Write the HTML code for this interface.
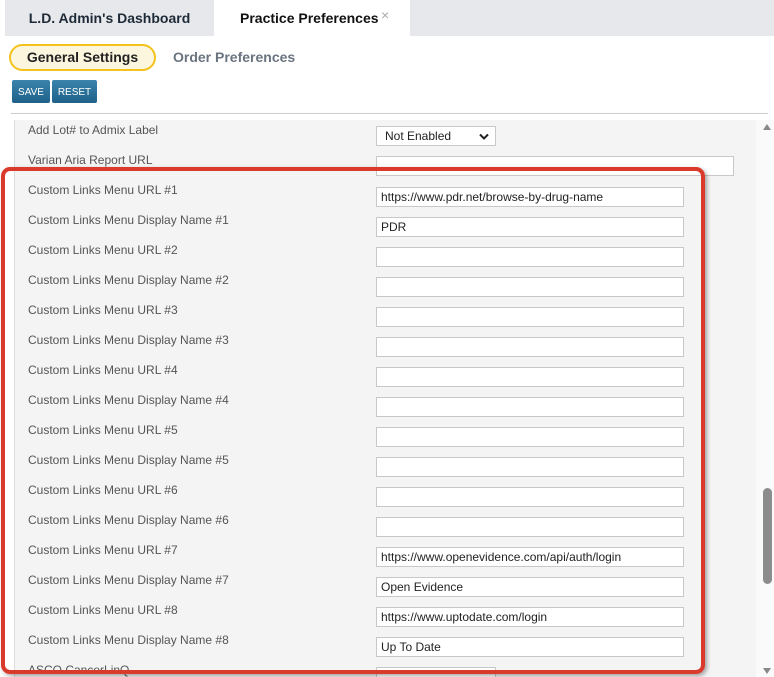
<!DOCTYPE html>
<html><head><style>
html,body{margin:0;width:774px;height:677px;overflow:hidden}
body{background:#fff;font-family:"Liberation Sans",Arial,sans-serif;position:relative}
.tabs{position:absolute;left:0;top:0;width:774px;height:36px;background:#fff}
.t1{position:absolute;left:5px;top:0;width:209px;height:36px;background:#e6e8eb;font-weight:bold;font-size:14px;color:#1e2a38;line-height:36px;text-align:center}
.t2{position:absolute;left:214px;top:0;width:196px;height:36px;background:#fff;font-weight:bold;font-size:14px;color:#111;line-height:36px}
.t3{position:absolute;left:410px;top:0;width:364px;height:36px;background:#e6e8eb}
.pill{position:absolute;left:9px;top:44px;width:143px;height:23px;border:2px solid #f3c21c;border-radius:14px;background:#fdf6df;font-weight:bold;font-size:14px;line-height:23px;text-align:center;color:#222}
.op{position:absolute;left:173px;top:49px;font-weight:bold;font-size:14px;color:#6a7480}
.btn{position:absolute;top:80px;height:23px;background:linear-gradient(#3a84ad,#1f6189);color:#fff;font-size:10px;text-align:center;border-radius:2px;box-sizing:border-box;padding-top:7px;line-height:11px}
.sep{position:absolute;left:11px;top:113px;width:757px;height:1px;background:#ccc}
.panel{position:absolute;left:14px;top:120px;width:741px;height:557px;background:#f4f4f4;border-left:1px solid #ddd;border-right:1px solid #ddd}
.lbl{position:absolute;left:28px;font-size:12px;color:#555}
.in{position:absolute;left:376px;width:308px;height:20px;background:#fff;border:1px solid #c8c8c8;font-size:12px;color:#222;line-height:19px;padding-left:4px;box-sizing:border-box}
.red{position:absolute;left:1px;top:167px;width:696px;height:499px;border:4px solid #d93a2b;border-radius:9px;box-shadow:2px 2px 4px rgba(0,0,0,.35)}
.sb{position:absolute;left:756px;top:120px;width:18px;height:557px;background:#fafafa}
</style></head><body>
<div class="tabs"><div class="t1">L.D. Admin's Dashboard</div><div class="t2"><span style="margin-left:26px">Practice Preferences</span><span style="position:absolute;left:167px;top:-3px;color:#aaa;font-weight:normal;font-size:14px">×</span></div><div class="t3"></div></div>
<div class="pill">General Settings</div>
<div class="op">Order Preferences</div>
<div class="btn" style="left:12px;width:38px">SAVE</div>
<div class="btn" style="left:52px;width:45px">RESET</div>
<div class="sep"></div>
<div class="panel"></div>
<div class="lbl" style="top:123px">Add Lot# to Admix Label</div>
<div class="in" style="top:126px;width:120px;height:20px;line-height:19px;padding-left:8px">Not Enabled<svg style="position:absolute;right:6px;top:6px" width="10" height="7" viewBox="0 0 10 7"><path d="M1 1.5L5 5.5L9 1.5" stroke="#222" stroke-width="2" fill="none"/></svg></div>
<div class="lbl" style="top:153px">Varian Aria Report URL</div>
<div class="in" style="top:156px;width:358px"></div>
<div class="lbl" style="top:183px">Custom Links Menu URL #1</div><div class="in" style="top:187px">https://www.pdr.net/browse-by-drug-name</div>
<div class="lbl" style="top:213px">Custom Links Menu Display Name #1</div><div class="in" style="top:217px">PDR</div>
<div class="lbl" style="top:243px">Custom Links Menu URL #2</div><div class="in" style="top:247px"></div>
<div class="lbl" style="top:273px">Custom Links Menu Display Name #2</div><div class="in" style="top:277px"></div>
<div class="lbl" style="top:303px">Custom Links Menu URL #3</div><div class="in" style="top:307px"></div>
<div class="lbl" style="top:333px">Custom Links Menu Display Name #3</div><div class="in" style="top:337px"></div>
<div class="lbl" style="top:363px">Custom Links Menu URL #4</div><div class="in" style="top:367px"></div>
<div class="lbl" style="top:393px">Custom Links Menu Display Name #4</div><div class="in" style="top:397px"></div>
<div class="lbl" style="top:423px">Custom Links Menu URL #5</div><div class="in" style="top:427px"></div>
<div class="lbl" style="top:453px">Custom Links Menu Display Name #5</div><div class="in" style="top:457px"></div>
<div class="lbl" style="top:483px">Custom Links Menu URL #6</div><div class="in" style="top:487px"></div>
<div class="lbl" style="top:513px">Custom Links Menu Display Name #6</div><div class="in" style="top:517px"></div>
<div class="lbl" style="top:543px">Custom Links Menu URL #7</div><div class="in" style="top:547px">https://www.openevidence.com/api/auth/login</div>
<div class="lbl" style="top:573px">Custom Links Menu Display Name #7</div><div class="in" style="top:577px">Open Evidence</div>
<div class="lbl" style="top:603px">Custom Links Menu URL #8</div><div class="in" style="top:607px">https://www.uptodate.com/login</div>
<div class="lbl" style="top:633px">Custom Links Menu Display Name #8</div><div class="in" style="top:637px">Up To Date</div>
<div class="lbl" style="top:663px">ASCO CancerLinQ</div><div class="in" style="top:667px;width:120px;height:10px;border-bottom:none"></div>
<div class="red"></div>
<div class="sb"><div style="position:absolute;left:7px;top:4px;width:0;height:0;border-left:4px solid transparent;border-right:4px solid transparent;border-bottom:6px solid #888"></div>
<div style="position:absolute;left:7px;top:368px;width:9px;height:96px;background:#8c8c8c;border-radius:5px"></div>
<div style="position:absolute;left:7px;top:548px;width:0;height:0;border-left:4px solid transparent;border-right:4px solid transparent;border-top:6px solid #888"></div></div>
</body></html>
